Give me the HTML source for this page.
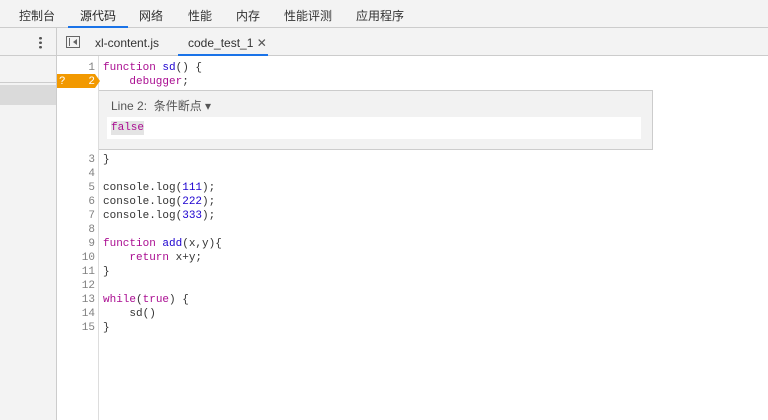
<!DOCTYPE html>
<html><head><meta charset="utf-8"><style>
*{margin:0;padding:0;box-sizing:border-box}
body{width:768px;height:420px;overflow:hidden;background:#fff;font-family:"Liberation Sans","Noto Sans CJK SC",sans-serif;position:relative;color:#333}
.tabs{position:absolute;left:0;top:0;width:768px;height:28px;background:#f3f3f3;border-bottom:1px solid #ccc}
.tabs span{position:absolute;top:7px;font-size:12px;color:#333}
.ul{position:absolute;left:68px;top:26px;width:60px;height:2px;background:#1a73e8}
.tb{position:absolute;left:0;top:28px;width:768px;height:28px;background:#f3f3f3;border-bottom:1px solid #ccc}
.lp{position:absolute;left:0;top:56px;width:57px;height:364px;background:#f3f3f3;border-right:1px solid #ccc}
.code{font-family:"Liberation Mono",monospace;font-size:11px;position:absolute;white-space:pre;line-height:14px}
.ln{position:absolute;left:57px;width:38px;text-align:right;color:#808080}
.k{color:#aa0d91}.n{color:#1c00cf}.v{color:#1c00cf}
</style></head><body>
<div class="tabs">
<span style="left:19px">控制台</span><span style="left:80px;color:#222">源代码</span><span style="left:139px">网络</span><span style="left:188px">性能</span><span style="left:236px">内存</span><span style="left:284px">性能评测</span><span style="left:356px">应用程序</span>
<div class="ul"></div></div>
<div class="tb">
<div style="position:absolute;left:39px;top:8px;width:3px;height:13px;background:radial-gradient(circle,#555 1.3px,transparent 1.5px) 0 0/3px 4.5px"></div>
<div style="position:absolute;left:56px;top:0;width:1px;height:28px;background:#ccc"></div>
<div style="position:absolute;left:66px;top:8px;width:14px;height:12px;border:1px solid #666"></div>
<div style="position:absolute;left:69px;top:10px;width:1px;height:8px;background:#666"></div>
<div style="position:absolute;left:73px;top:11px;border-right:4px solid #666;border-top:3px solid transparent;border-bottom:3px solid transparent"></div>
<span style="position:absolute;left:95px;top:8px;font-size:12px">xl-content.js</span>
<span style="position:absolute;left:188px;top:8px;font-size:12px">code_test_1 <span style="color:#555">✕</span></span>
<div style="position:absolute;left:178px;top:26px;width:90px;height:2px;background:#1a73e8"></div>
</div>
<div class="lp">
<div style="position:absolute;left:0;top:26px;width:56px;height:1px;background:#ccc"></div>
<div style="position:absolute;left:0;top:29px;width:56px;height:20px;background:#dadada"></div>
</div>
<div style="position:absolute;left:98px;top:56px;width:1px;height:364px;background:#ddd"></div>
<div style="position:absolute;left:57px;top:74px;width:38px;height:14px;background:#f29900"></div>
<div style="position:absolute;left:95px;top:74px;border-left:5px solid #f29900;border-top:7px solid transparent;border-bottom:7px solid transparent"></div>
<div class="code" style="left:59px;top:75px;color:#fff">?</div>
<div class="code ln" style="top:61px">1</div>
<div class="code ln" style="top:75px;color:#fff">2</div>
<div class="code" style="left:103px;top:61px"><span class="k">function</span> <span class="n">sd</span>() {
    <span class="k">debugger</span>;</div>
<div style="position:absolute;left:99px;top:90px;width:554px;height:60px;background:#f2f2f2;border:1px solid #ccc;border-left:none">
<span style="position:absolute;left:12px;top:6px;font-size:12px;color:#555">Line 2:&nbsp; 条件断点 ▾</span>
<div style="position:absolute;left:8px;top:26px;width:534px;height:22px;background:#fff"><span class="code" style="left:4px;top:4px;color:#aa0d91;background:#e4e4e4">false</span></div>
</div>
<div class="code ln" style="top:153px">3
4
5
6
7
8
9
10
11
12
13
14
15</div>
<div class="code" style="left:103px;top:153px">}

console.log(<span class="v">111</span>);
console.log(<span class="v">222</span>);
console.log(<span class="v">333</span>);

<span class="k">function</span> <span class="n">add</span>(x,y){
    <span class="k">return</span> x+y;
}

<span class="k">while</span>(<span class="k">true</span>) {
    sd()
}</div>
</body></html>
